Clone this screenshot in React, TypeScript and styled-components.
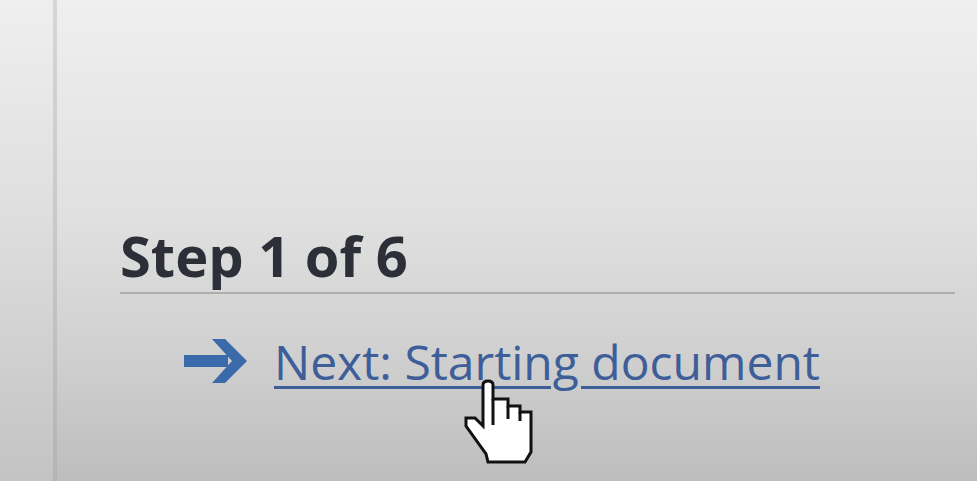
import React from "react";
import styled, { createGlobalStyle } from "styled-components";

const Global = createGlobalStyle`
  html, body { margin: 0; padding: 0; }
  body { width: 977px; height: 481px; overflow: hidden; background: #d8d8d8; }
`;

const Frame = styled.div`
  display: flex;
  width: 977px;
  height: 481px;
`;

const Gutter = styled.div`
  width: 53px;
  background: linear-gradient(to bottom, #efefef 0%, #dedede 45%, #c3c3c3 100%);
`;

const Separator = styled.div`
  width: 4px;
  background: linear-gradient(to bottom, #d6d6d6 0%, #c8c8c8 50%, #b4b4b4 100%);
`;

const Pane = styled.div`
  flex: 1;
  display: flex;
  flex-direction: column;
  padding: 222px 22px 0 63px;
  background: linear-gradient(to bottom, #efefef 0%, #e0e0e0 45%, #cfcfcf 75%, #bdbdbd 100%);
`;

const StepTitle = styled.h2`
  margin: 0;
  font-family: "Open Sans", "Noto Sans", sans-serif;
  font-weight: 700;
  font-size: 56px;
  line-height: 66px;
  color: #2c2f38;
`;

const Divider = styled.div`
  height: 2px;
  margin-top: 4px;
  background: #adadad;
`;

const LinkRow = styled.div`
  position: relative;
  display: flex;
  align-items: center;
  gap: 25px;
  margin-top: 39px;
  padding-left: 63px;
`;

const StepLink = styled.a`
  font-family: "Open Sans", "Noto Sans", sans-serif;
  font-size: 48px;
  line-height: 58px;
  color: #3d5e98;
  text-decoration: underline;
  text-decoration-thickness: 3px;
  text-underline-offset: 6px;
`;

const Cursor = styled.svg`
  position: absolute;
  left: 343px;
  top: 46px;
`;

const Arrow = () => (
  <svg width="66" height="46" viewBox="0 0 66 46">
    <rect x="1" y="16" width="44" height="12" fill="#3b6aaa" />
    <polygon points="29,0 42,0 64,22 42,44 29,44 49,22" fill="#3b6aaa" />
  </svg>
);

const HandCursor = () => (
  <Cursor width="74" height="90" viewBox="0 0 74 90">
    <path
      d="M20 6 Q20 2 25 2 Q30 2 30 6 L30 20 L45 20 L45 27 L57 27 L57 33 L68 33 L68 73 L62 83 L25 83 L23 75 L3 47 L3 39 L12 39 L20 47 Z"
      fill="#ffffff"
      stroke="#111"
      strokeWidth="3"
      strokeLinejoin="miter"
    />
    <path d="M30 20 L30 46 M45 27 L45 40 M57 33 L57 42" stroke="#111" strokeWidth="3" fill="none" />
  </Cursor>
);

export default function App() {
  return (
    <>
      <Global />
      <Frame>
        <Gutter />
        <Separator />
        <Pane>
          <StepTitle>Step 1 of 6</StepTitle>
          <Divider />
          <LinkRow>
            <Arrow />
            <StepLink href="#">Next: Starting document</StepLink>
            <HandCursor />
          </LinkRow>
        </Pane>
      </Frame>
    </>
  );
}
